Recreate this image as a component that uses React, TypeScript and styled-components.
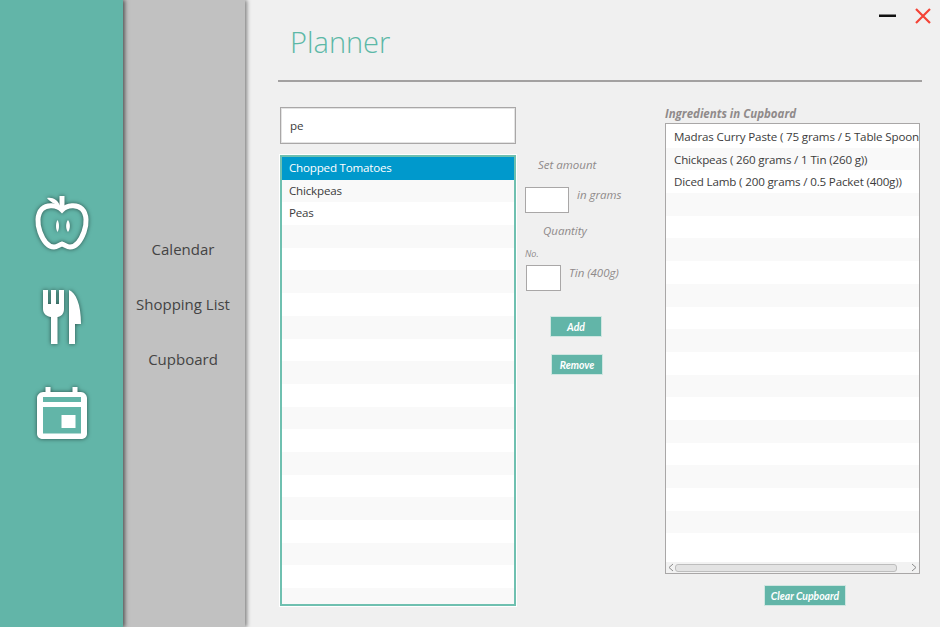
import React from "react";
import styled, { createGlobalStyle } from "styled-components";

const GlobalStyle = createGlobalStyle`
html, body {
    margin: 0;
    padding: 0;
    height: 100%;
    background: #f0f0f0;
}
* {
    box-sizing: border-box;
}
`;

const foods = ["Chopped Tomatoes", "Chickpeas", "Peas"];
const cupboard = [
    "Madras Curry Paste ( 75 grams / 5 Table Spoon",
    "Chickpeas ( 260 grams / 1 Tin (260 g))",
    "Diced Lamb ( 200 grams / 0.5 Packet (400g))",
];

const AppleIcon = () => (
    <svg width="54" height="56" viewBox="0 0 54 56" fill="none">
        <path d="M27 15C22 10 12 9 7 14C2 19 2 29 5 37C8 45 13 52 19 52C22 52 24 50 27 49C30 50 32 52 35 52C41 52 46 45 49 37C52 29 52 19 47 14C42 9 32 10 27 15Z" stroke="#fff" strokeWidth="5" />
        <path d="M27 15V1" stroke="#fff" strokeWidth="5" />
        <path d="M25 11C21 10 15 7 12 3C18 2 23 5 25 11Z" fill="#fff" />
        <path d="M22.500 25C24.500 28 24.500 34 22.500 37C20.500 34 20.500 28 22.500 25Z" fill="#fff" />
        <path d="M33 25C35.500 28 35.500 34 33 37C30.500 34 30.500 28 33 25Z" fill="#fff" />
    </svg>
);

const CutleryIcon = () => (
    <svg width="38" height="54" viewBox="0 0 38 54" fill="#fff">
        <path d="M0 0H5V14H8V0H13V14H16V0H21V19C21 24 18 26.500 14.500 27V54H8V27C4 26.500 0 24 0 19Z" />
        <path d="M26 0C33 3 38 14 38 34H32V54H26Z" />
    </svg>
);

const CalendarIcon = () => (
    <svg width="50" height="56" viewBox="0 0 50 56" fill="none">
        <path d="M8.500 2H13.500V7H35.500V2H40.500V7H44C47 7 50 10 50 13V49C50 52 47 54 44 54H6C3 54 0 52 0 49V13C0 10 3 7 6 7H8.500Z" fill="#fff" />
        <rect x="6" y="12" width="38" height="5" fill="#62b5a8" />
        <rect x="6" y="22" width="38" height="26.500" fill="#62b5a8" />
        <rect x="24.500" y="30" width="14" height="13" fill="#fff" />
    </svg>
);

export default function App() {
    return (
        <Page>
            <GlobalStyle />
            <Rail>
                <RailIcon><AppleIcon /></RailIcon>
                <RailIcon><CutleryIcon /></RailIcon>
                <RailIcon><CalendarIcon /></RailIcon>
            </Rail>
            <SideNav>
                <NavItem>Calendar</NavItem>
                <NavItem>Shopping List</NavItem>
                <NavItem>Cupboard</NavItem>
            </SideNav>
            <Main>
                <WindowControls>
                    <svg width="17" height="4" viewBox="0 0 17 4"><rect width="17" height="2.500" y="0.500" fill="#111" /></svg>
                    <svg width="16" height="16" viewBox="0 0 16 16"><path d="M1 1L15 15M15 1L1 15" stroke="#f44336" strokeWidth="2.200" /></svg>
                </WindowControls>
                <Title>Planner</Title>
                <Divider />
                <Columns>
                    <LeftColumn>
                        <SearchBox>pe</SearchBox>
                        <FoodList>
                            {Array.from({ length: 20 }).map((_, i) => (
                                <FoodRow key={i} $index={i} $selected={i === 0}>{foods[i]}</FoodRow>
                            ))}
                        </FoodList>
                    </LeftColumn>
                    <MiddleColumn>
                        <SetAmount>Set amount</SetAmount>
                        <AmountRow>
                            <AmountBox $width={44} />
                            <AmountLabel>in grams</AmountLabel>
                        </AmountRow>
                        <QuantityLabel>Quantity</QuantityLabel>
                        <NoLabel>No.</NoLabel>
                        <TinRow>
                            <AmountBox $width={35} />
                            <TinLabel>Tin (400g)</TinLabel>
                        </TinRow>
                        <AddButton>Add</AddButton>
                        <RemoveButton>Remove</RemoveButton>
                    </MiddleColumn>
                    <RightColumn>
                        <CupboardTitle>Ingredients in Cupboard</CupboardTitle>
                        <CupboardList>
                            <CupboardRows>
                                {Array.from({ length: 19 }).map((_, i) => (
                                    <CupboardRow key={i} $index={i}>{cupboard[i]}</CupboardRow>
                                ))}
                            </CupboardRows>
                            <ScrollBar>
                                <ScrollArrow>
                                    <svg width="6" height="9" viewBox="0 0 6 9" fill="none"><path d="M5 1L1 4.500L5 8" stroke="#8c8c8c" /></svg>
                                </ScrollArrow>
                                <ScrollThumb />
                                <ScrollArrow>
                                    <svg width="6" height="9" viewBox="0 0 6 9" fill="none"><path d="M1 1L5 4.500L1 8" stroke="#8c8c8c" /></svg>
                                </ScrollArrow>
                            </ScrollBar>
                        </CupboardList>
                        <ClearButton>Clear Cupboard</ClearButton>
                    </RightColumn>
                </Columns>
            </Main>
        </Page>
    );
}

const Page = styled.div`
display: flex;
width: 940px;
height: 627px;
overflow: hidden;
background: #f0f0f0;
font-family: "Open Sans", "Noto Sans", sans-serif;
color: #3c3c3c;
`;

const Rail = styled.nav`
position: relative;
z-index: 2;
flex: 0 0 123px;
display: flex;
flex-direction: column;
align-items: center;
gap: 41px;
padding-top: 195px;
background: #62b5a8;
box-shadow: 2px 0 4px rgb(0 0 0 / 55%);
`;

const RailIcon = styled.div`
display: flex;
justify-content: center;
height: 54px;
filter: drop-shadow(0 0 2px rgb(0 0 0 / 55%));
`;

const SideNav = styled.nav`
position: relative;
z-index: 1;
flex: 0 0 122px;
display: flex;
flex-direction: column;
align-items: center;
gap: 33px;
padding: 238px 2px 0 0;
background: #c1c1c1;
box-shadow: 2px 0 4px rgb(0 0 0 / 45%);
`;

const NavItem = styled.div`
font-size: 15px;
line-height: 22px;
color: #444;
`;

const Main = styled.main`
position: relative;
flex: 1;
min-width: 0;
padding: 0 18px 0 33px;
`;

const WindowControls = styled.div`
position: absolute;
top: 8px;
right: 9px;
display: flex;
align-items: center;
gap: 19px;
`;

const Title = styled.h1`
margin: 0 0 0 12px;
padding-top: 21px;
height: 80px;
font-size: 29px;
line-height: 42px;
font-weight: 300;
color: #5cb8a7;
`;

const Divider = styled.div`
height: 2px;
background: #a3a1a1;
`;

const Columns = styled.div`
display: flex;
padding: 25px 0 0 2px;
`;

const LeftColumn = styled.div`
flex: 0 0 236px;
display: flex;
flex-direction: column;
gap: 11px;
`;

const SearchBox = styled.div`
height: 37px;
padding-left: 9px;
border: 1px solid #a9a7a7;
box-shadow: inset 0 0 0 1px #e3e3e3;
background: #fff;
font-size: 11.6px;
letter-spacing: -0.15px;
line-height: 36px;
`;

const FoodList = styled.div`
height: 451px;
overflow: hidden;
border: 2px solid #6fc0b0;
outline: 1px solid #fff;
background: #fff;
`;

const FoodRow = styled.div<{ $index: number; $selected: boolean }>`
height: 22.7px;
padding-left: 7px;
font-size: 11.6px;
letter-spacing: -0.2px;
line-height: 21.5px;
background: ${(p) => (p.$selected ? "#0099cc" : p.$index % 2 ? "#f9f9f9" : "#fff")};
color: ${(p) => (p.$selected ? "#fff" : "#3c3c3c")};
`;

const MiddleColumn = styled.div`
flex: 0 0 149px;
display: flex;
flex-direction: column;
padding: 50px 0 0 9px;
font-style: italic;
color: #8f8a8a;
font-size: 11.5px;
`;

const SetAmount = styled.div`
margin-left: 13px;
line-height: 16px;
`;

const AmountRow = styled.div`
display: flex;
gap: 8px;
margin-top: 14px;
`;

const AmountBox = styled.div<{ $width: number }>`
width: ${(p) => p.$width}px;
height: 26px;
border: 1px solid #a9a7a7;
background: #fff;
`;

const AmountLabel = styled.div`
line-height: 16px;
`;

const QuantityLabel = styled.div`
margin: 10px 0 0 18px;
line-height: 16px;
`;

const NoLabel = styled.div`
margin-top: 9px;
font-size: 9px;
line-height: 11px;
`;

const TinRow = styled.div`
display: flex;
gap: 8px;
margin: 6px 0 0 1px;
`;

const TinLabel = styled.div`
line-height: 16px;
`;

const ActionButton = styled.button`
display: block;
height: 21px;
padding: 0;
border: 1px solid #cfe6e1;
background: #62b5a8;
color: #fff;
font-family: Lato, "Open Sans", sans-serif;
font-weight: 700;
font-style: italic;
font-size: 10.4px;
`;

const AddButton = styled(ActionButton)`
width: 52px;
margin: 25px 0 0 25px;
`;

const RemoveButton = styled(ActionButton)`
width: 52px;
margin: 17px 0 0 26px;
`;

const RightColumn = styled.div`
flex: 0 0 255px;
min-width: 0;
display: flex;
flex-direction: column;
`;

const CupboardTitle = styled.div`
height: 16px;
font-size: 11.5px;
line-height: 13px;
font-weight: 700;
font-style: italic;
color: #8f8a8a;
`;

const CupboardList = styled.div`
display: flex;
flex-direction: column;
height: 451px;
border: 1px solid #a9a7a7;
background: #fff;
`;

const CupboardRows = styled.div`
flex: 1;
min-height: 0;
margin-top: 1px;
overflow: hidden;
`;

const CupboardRow = styled.div<{ $index: number }>`
height: 22.7px;
padding-left: 8px;
font-size: 11.6px;
letter-spacing: -0.16px;
line-height: 23px;
white-space: nowrap;
background: ${(p) => (p.$index % 2 ? "#f9f9f9" : "#fff")};
`;

const ScrollBar = styled.div`
flex: 0 0 11px;
display: flex;
align-items: center;
justify-content: space-between;
padding: 0 1px;
background: #f2f2f2;
`;

const ScrollArrow = styled.div`
display: flex;
width: 8px;
justify-content: center;
`;

const ScrollThumb = styled.div`
flex: 1;
height: 8px;
margin: 0 13px 0 0;
border: 1px solid #bdbdbd;
border-radius: 3px;
background: #e3e3e3;
`;

const ClearButton = styled(ActionButton)`
width: 82px;
margin: 11px 0 0 99px;
`;
